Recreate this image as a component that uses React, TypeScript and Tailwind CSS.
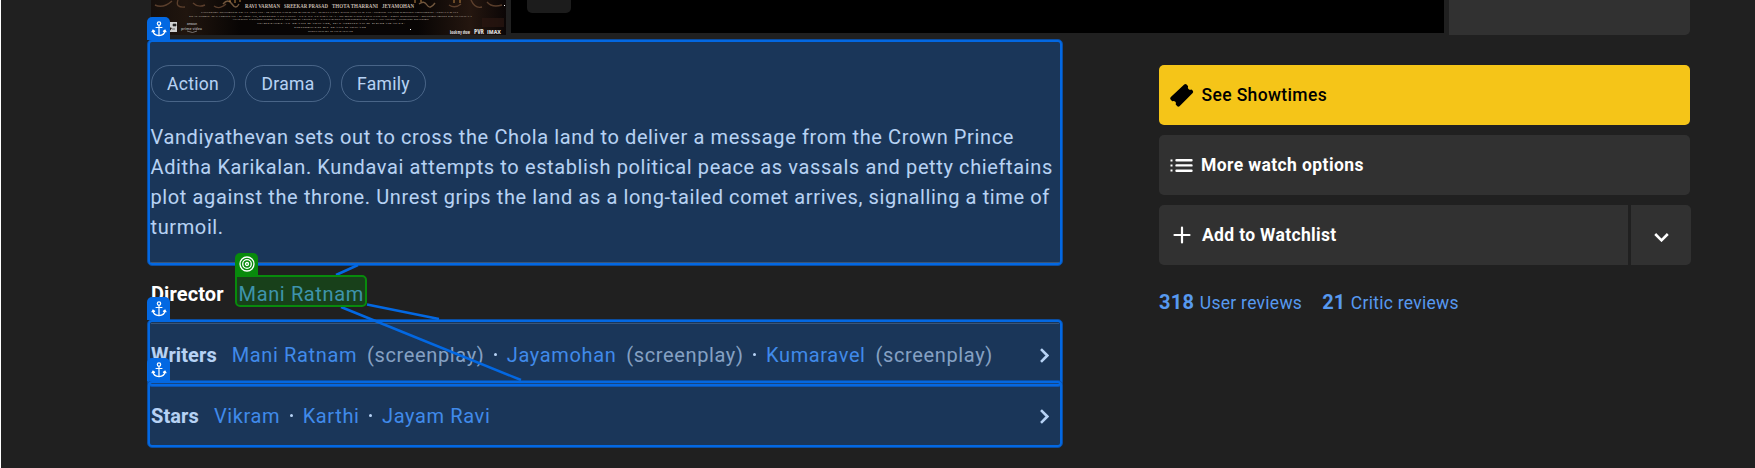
import React from "react";

const genres = [
  { name: "Action", width: "w-[84px]" },
  { name: "Drama", width: "w-[86px]" },
  { name: "Family", width: "w-[85px]" },
];

function Poster() {
  return (
    <svg className="block h-[35px] w-[355px]" viewBox="0 0 355 35" fontFamily="'Liberation Serif', serif" aria-label="Poster">
      <defs>
        <linearGradient id="glow" x1="0" x2="1" y1="0" y2="0">
          <stop offset="0" stopColor="#160f0c" />
          <stop offset=".1" stopColor="#20150e" />
          <stop offset=".25" stopColor="#080504" />
          <stop offset=".75" stopColor="#080504" />
          <stop offset=".9" stopColor="#24160f" />
          <stop offset="1" stopColor="#0b0606" />
        </linearGradient>
      </defs>
      <rect width="355" height="35" fill="url(#glow)" />
      <g fill="none" stroke="#6b4a34" strokeWidth="1.4" opacity=".8">
        <path d="M4 5q8 4 17-4M27 0q-3 8 7 7M42 3q5 5 12 2M63 6q5 4 12-2M310 4q-6 5-12 1M320 0q4 9 11 7M336 2q5 6 15 3" />
        <path d="M72 4q5-6 9 0t7 0M268 4q5-4 8 1t8-2" stroke="#8a6a4b" />
      </g>
      <path d="M331 18h22v9h-22z" fill="#2b1711" opacity=".7" />
      <path d="M79 0v2M84 0v3M89 0v2M264 0v3M270 0v2M303 0v3M309 0v3" stroke="#b98240" strokeWidth="1" />
      <g fill="#c5bbb0" fontSize="6" fontWeight="700">
        <text x="94" y="7.5" textLength="35" lengthAdjust="spacingAndGlyphs">RAVI VARMAN</text>
        <text x="133" y="7.5" textLength="44" lengthAdjust="spacingAndGlyphs">SREEKAR PRASAD</text>
        <text x="181" y="7.5" textLength="46" lengthAdjust="spacingAndGlyphs">THOTA THARRANI</text>
        <text x="231" y="7.5" textLength="32" lengthAdjust="spacingAndGlyphs">JEYAMOHAN</text>
      </g>
      <g fill="#a39a90" fontSize="2.9" fontWeight="700">
        <text x="50" y="13" textLength="257" lengthAdjust="spacingAndGlyphs">COSTUME DESIGNER EKA LAKHANI · MAKEUP VIKRAM GAIKWAD · JEWELLERY KISHANDAS &amp; CO · SOUND ANAND KRISHNAMOORTHI · STILLS RAVI</text>
        <text x="38" y="16.7" textLength="283" lengthAdjust="spacingAndGlyphs">DIALOGUE JEYAMOHAN · KABILAN, KRITHIKA NELSON · VFX NY VFXWAALA · DI RED CHILLIES COLOR · PRO JOHNSON · DESIGN GOPI PRASANNAA</text>
        <text x="81" y="20.4" textLength="197" lengthAdjust="spacingAndGlyphs">ACTION CHOREOGRAPHY SHAM KAUSHAL · EXECUTIVE PRODUCER SIVA ANANTH · SOUND DESIGN</text>
        <text x="106" y="24.1" textLength="148" lengthAdjust="spacingAndGlyphs">SCREENPLAY MANI RATNAM, JEYAMOHAN &amp; KUMARAVEL</text>
        <text x="143" y="27.8" textLength="72" lengthAdjust="spacingAndGlyphs">PRODUCED BY MANI RATNAM</text>
        <text x="157" y="31.5" textLength="45" lengthAdjust="spacingAndGlyphs">DIRECTED BY MANI RATNAM</text>
      </g>
      <path d="M17 22h9v10h-8l3-4-3-1z" fill="#d0d0d0" />
      <path d="M22 24h3v2h-3zM21 29h3" fill="#222" stroke="#222" strokeWidth=".6" />
      <g fill="#9a9a9a" fontFamily="'Open Sans', sans-serif" fontWeight="700">
        <text x="36" y="25" fontSize="2.8" textLength="10">amazon</text>
        <text x="30" y="29.600" fontSize="3.4" textLength="21" lengthAdjust="spacingAndGlyphs">prime video</text>
        <path d="M36 31q6 3 10 0" fill="none" stroke="#9a9a9a" strokeWidth=".7" />
      </g>
      <g fill="#d4d4d4" fontFamily="'Open Sans', sans-serif" fontWeight="800">
        <text x="299" y="33.5" fontSize="4.6" textLength="20" lengthAdjust="spacingAndGlyphs">book my show</text>
        <text x="323" y="34" fontSize="6" textLength="10" lengthAdjust="spacingAndGlyphs">PVR</text>
        <text x="336" y="33.8" fontSize="4.6" textLength="14" lengthAdjust="spacingAndGlyphs">IMAX</text>
      </g>
      <path d="M259 29h1v1h-1zM353 5h1v1h-1z" fill="#fff" />
    </svg>
  );
}

function Chevron({ className }: { className: string }) {
  return (
    <svg className={className} viewBox="0 0 9 15" fill="none" stroke="currentColor" strokeWidth="2.6">
      <path d="M1 1.2 7.3 7.5 1 13.8" />
    </svg>
  );
}

function Name({ children }: { children: React.ReactNode }) {
  return <a className="text-[#5799ef]">{children}</a>;
}

function Role() {
  return <span className="ml-[10px] text-white/70">(screenplay)</span>;
}

function Dot() {
  return <span className="mr-[10px] ml-[9.5px] inline-block size-[3px] rounded-full bg-white align-[6px]" />;
}

function CreditRow({ label, arrow, children }: { label: string; arrow?: boolean; children: React.ReactNode }) {
  return (
    <div className="flex h-[61px] items-center border-t border-white/20 pt-[2px] pr-[10px]">
      <span className="mr-[15px] text-[20px] leading-[30px] font-bold tracking-[0.1px]">{label}</span>
      <div className="flex-1 text-[20px] leading-[30px] tracking-[0.625px] whitespace-nowrap">{children}</div>
      {arrow && <Chevron className="h-[15px] w-[9px]" />}
    </div>
  );
}

function Anchor({ className }: { className: string }) {
  return (
    <div className={"absolute left-[147px] flex h-[23px] w-[23px] items-center justify-center rounded-t-[5px] bg-[#0368e2] " + className}>
      <svg className="size-[16px]" viewBox="0 0 16 16" fill="none" stroke="#fff" strokeWidth="1.2">
        <circle cx="8" cy="2.6" r="1.7" />
        <path d="M8 4.3V14.5M4.6 6.5h6.8" />
        <path d="M2 9.4c.2 3 2.600 5 6 5.200 3.400-.2 5.800-2.200 6-5.200M.8 11.200 2 9.200l2 1.300M15.200 11.200 14 9.200l-2 1.300" />
      </svg>
    </div>
  );
}

function Frame({ className }: { className: string }) {
  return (
    <div className={"absolute left-[147px] w-[916px] rounded-[5px] border border-[#0b4da0] bg-[#0c69df]/30 " + className}>
      <div className="size-full rounded-[4px] border-2 border-[#0368e2]" />
    </div>
  );
}

export default function App() {
  return (
    <div className="relative h-[468px] w-full overflow-hidden border-l border-white bg-[#202020] font-[Roboto,sans-serif] text-white">
      <div className="flex h-[35px] items-start pl-[150px]">
        <Poster />
        <div className="ml-[5px] h-[33px] w-[933px] bg-black pl-[16px]">
          <div className="h-[13px] w-[44px] rounded-b-[5px] bg-[#1c1c1c]" />
        </div>
        <div className="ml-[5px] h-[35px] w-[241px] rounded-br-[5px] bg-[#313131]" />
      </div>

      <div className="flex items-start pt-[30px] pl-[150px]">
        <main className="w-[908px]">
          <div className="flex gap-[10px]">
            {genres.map((g) => (
              <span key={g.name} className={"flex h-[37px] items-center justify-center rounded-full border border-white/30 pt-[2px] text-[17.5px] tracking-[0.31px] " + g.width}>
                {g.name}
              </span>
            ))}
          </div>
          <p className="mt-5 mb-5 -ml-[0.5px] text-[20px] leading-[30px] tracking-[0.62px] whitespace-nowrap">
            Vandiyathevan sets out to cross the Chola land to deliver a message from the Crown Prince
            <br />
            Aditha Karikalan. Kundavai attempts to establish political peace as vassals and petty chieftains
            <br />
            plot against the throne. Unrest grips the land as a long-tailed comet arrives, signalling a time of
            <br />
            turmoil.
          </p>
          <CreditRow label="Director">
            <Name>Mani Ratnam</Name>
          </CreditRow>
          <CreditRow label="Writers" arrow>
            <Name>Mani Ratnam</Name>
            <Role />
            <Dot />
            <Name>Jayamohan</Name>
            <Role />
            <Dot />
            <Name>Kumaravel</Name>
            <Role />
          </CreditRow>
          <CreditRow label="Stars" arrow>
            <Name>Vikram</Name>
            <Dot />
            <Name>Karthi</Name>
            <Dot />
            <Name>Jayam Ravi</Name>
          </CreditRow>
        </main>

        <aside className="ml-[100px] flex w-[532px] flex-col gap-[10px] text-[17.5px] tracking-[0.31px]">
          <button className="flex h-[60px] w-[531px] items-center rounded-[5px] bg-[#f5c518] pl-[10px] font-medium tracking-[0.36px] text-black">
            <svg className="mr-[7.5px] size-[25px]" viewBox="0 0 25 25">
              <path
                d="M1.600 14.300 15.200 1.400q1.300-1 2.400.1l1.500 1.700q-.8 1.900.6 3 1.200 1 2.900.2l1.200 1.300q.9 1.200-.1 2.300L10.500 23.200q-1.300 1-2.400-.1l-1.400-1.600q.8-1.900-.6-3-1.300-1-2.900-.2l-1.600-1.700q-.9-1.200 0-2.300z"
                fill="#000"
              />
            </svg>
            See Showtimes
          </button>
          <button className="flex h-[60px] w-[531px] items-center rounded-[5px] bg-[#313131] pl-[10px] font-bold tracking-[0.4px]">
            <svg className="mr-[7px] h-[15px] w-[25px]" viewBox="0 0 25 15" fill="#fff">
              <path d="M1.500 1.500h2v2h-2zM1.500 6.500h2v2h-2zM1.500 11.500h2v2h-2z" />
              <path d="M7.500 1h15q1.200 0 1.200 1.200t-1.200 1.200h-15q-1.200 0-1.200-1.200T7.500 1zM7.500 6.200h15q1.200 0 1.200 1.200t-1.200 1.200h-15q-1.200 0-1.200-1.200t1.200-1.200zM7.500 11.500h15q1.200 0 1.200 1.200t-1.200 1.200h-15q-1.200 0-1.200-1.200t1.200-1.200z" />
            </svg>
            More watch options
          </button>
          <div className="flex gap-[3px]">
            <button className="flex h-[60px] w-[469px] items-center rounded-l-[5px] bg-[#313131] pl-[14px] font-bold tracking-[0.34px]">
              <svg className="mr-[11px] size-[18px]" viewBox="0 0 18 18" stroke="#fff" strokeWidth="2.2" strokeLinecap="round">
                <path d="M9 1.500v15M1.500 9h15" />
              </svg>
              Add to Watchlist
            </button>
            <button className="flex h-[60px] w-[60px] items-center justify-center rounded-r-[5px] bg-[#313131]">
              <Chevron className="mt-[4px] h-[15px] w-[9px] rotate-90" />
            </button>
          </div>
          <div className="mt-[12px] flex items-baseline text-[#5799ef]">
            <b className="mr-[5.500px] text-[20px] leading-[30px] tracking-[0.3px]">318</b>
            <span className="tracking-[0.27px]">User reviews</span>
            <b className="mr-[5.500px] ml-[20px] text-[20px] leading-[30px] tracking-[0.100px]">21</b>
            <span className="tracking-[0.27px]">Critic reviews</span>
          </div>
        </aside>
      </div>

      <div className="pointer-events-none absolute inset-y-0 -left-px w-[1755px]">
        <Frame className="top-[39px] h-[227px]" />
        <Frame className="top-[319px] h-[68px]" />
        <Frame className="top-[380px] h-[68px]" />
        <Anchor className="top-[17px]" />
        <Anchor className="top-[297px]" />
        <Anchor className="top-[358px]" />
        <svg className="absolute inset-0 h-[468px] w-[1755px]" viewBox="0 0 1755 468" stroke="#0368e2" strokeWidth="2.5">
          <path d="M336 275l22-10M367 304.500l72 14.500M341 307l180 73" />
        </svg>
        <div className="absolute top-[275px] left-[235px] h-[32px] w-[132px] rounded-[5px] rounded-tl-none border-2 border-[#088a0c] bg-[#088a0c]/30" />
        <div className="absolute top-[253px] left-[235px] flex h-[22px] w-[23px] items-center justify-center rounded-t-[5px] bg-[#088a0c]">
          <svg className="size-[16px]" viewBox="0 0 16 16" fill="none" stroke="#fff" strokeWidth="1.3">
            <circle cx="8" cy="8" r="7" />
            <circle cx="8" cy="8" r="4.300" />
            <circle cx="8" cy="8" r="1.500" />
          </svg>
        </div>
      </div>
    </div>
  );
}
